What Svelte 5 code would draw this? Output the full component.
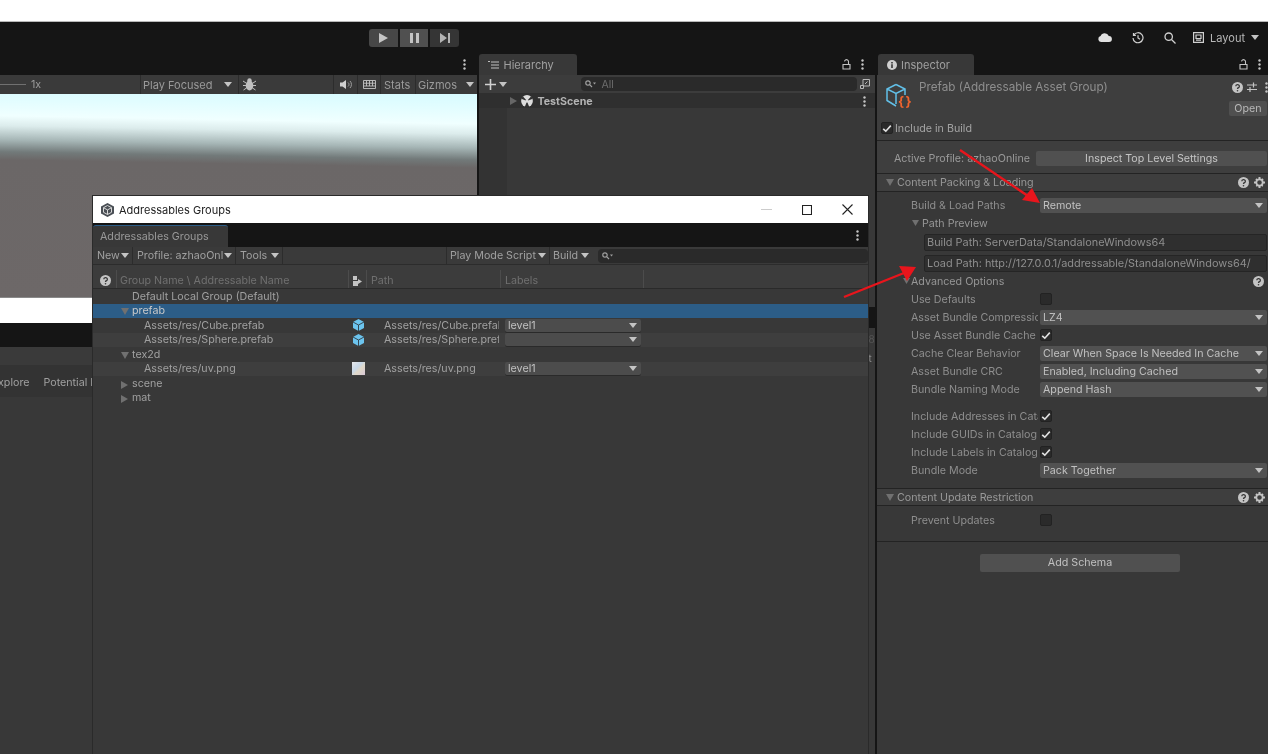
<script lang="ts">
  const treeRows = [
    { name: 'Default Local Group (Default)', depth: 0, alt: false },
    { name: 'prefab', depth: 0, fold: 'open', selected: true },
    { name: 'Assets/res/Cube.prefab', depth: 1, icon: 'cube', path: 'Assets/res/Cube.prefab', label: 'level1', alt: false },
    { name: 'Assets/res/Sphere.prefab', depth: 1, icon: 'cube', path: 'Assets/res/Sphere.prefab', label: '', alt: true },
    { name: 'tex2d', depth: 0, fold: 'open', alt: false },
    { name: 'Assets/res/uv.png', depth: 1, icon: 'tex', path: 'Assets/res/uv.png', label: 'level1', alt: true },
    { name: 'scene', depth: 0, fold: 'closed', alt: false },
    { name: 'mat', depth: 0, fold: 'closed', alt: false }
  ];

  const advancedRows = [
    { label: 'Use Defaults', check: false },
    { label: 'Asset Bundle Compression', value: 'LZ4' },
    { label: 'Use Asset Bundle Cache', check: true },
    { label: 'Cache Clear Behavior', value: 'Clear When Space Is Needed In Cache' },
    { label: 'Asset Bundle CRC', value: 'Enabled, Including Cached' },
    { label: 'Bundle Naming Mode', value: 'Append Hash' }
  ];

  const catalogRows = [
    { label: 'Include Addresses in Catalog', check: true },
    { label: 'Include GUIDs in Catalog', check: true },
    { label: 'Include Labels in Catalog', check: true },
    { label: 'Bundle Mode', value: 'Pack Together' }
  ];
</script>

{#snippet caret()}
  <svg class="caret" width="8" height="5" viewBox="0 0 8 5"><path d="M0 0h8L4 5z" fill="currentColor" /></svg>
{/snippet}

{#snippet kebab()}
  <svg class="kebab" width="3" height="11" viewBox="0 0 3 11"><circle cx="1.5" cy="1.5" r="1.2" /><circle cx="1.5" cy="5.5" r="1.2" /><circle cx="1.5" cy="9.5" r="1.2" /></svg>
{/snippet}

{#snippet lock()}
  <svg width="9" height="11" viewBox="0 0 9 11" fill="none" stroke="#c4c4c4" stroke-width="1.1"><path d="M1 5.500h7v4.500H1zM6.500 5.500V3a2 2 0 0 0-4-.6" /></svg>
{/snippet}

{#snippet help(size = 11)}
  <svg width={size} height={size} viewBox="0 0 11 11"><circle cx="5.500" cy="5.500" r="5.500" fill="#c4c4c4" /><path d="M3.800 4.200a1.800 1.600 0 1 1 2.600 1.400c-.6.4-.9.6-.9 1.300" fill="none" stroke="#383838" stroke-width="1.300" /><circle cx="5.500" cy="8.700" r=".8" fill="#383838" /></svg>
{/snippet}

{#snippet gear()}
  <svg width="11" height="11" viewBox="0 0 11 11"><circle cx="5.500" cy="5.500" r="3.200" fill="none" stroke="#c4c4c4" stroke-width="1.800" /><path d="M4.500 0h2v2h-2zM4.500 9h2v2h-2zM0 4.500h2v2H0zM9 4.500h2v2H9zM1.300 2.700l1.400-1.400 1 1-1.400 1.400zM8.300 9.700l-1.400-1.400 1-1 1.400 1.400zM9.700 2.700L8.300 1.300l-1 1 1.400 1.400zM2.700 9.700l1.400-1.400-1-1-1.400 1.400z" fill="#c4c4c4" /></svg>
{/snippet}

{#snippet search()}
  <svg width="11" height="8" viewBox="0 0 11 8" fill="none" stroke="#a0a0a0" stroke-width="1.200"><circle cx="3" cy="3" r="2.200" /><path d="M4.600 4.600L7 7" /><path d="M8 2.500h3L9.500 4.500z" fill="#a0a0a0" stroke="none" /></svg>
{/snippet}

{#snippet checkbox(on)}
  <span class="check">
    {#if on}
      <svg width="10" height="9" viewBox="0 0 10 9" fill="none" stroke="#e0e0e0" stroke-width="1.600"><path d="M1.200 4.800L3.800 7.200 8.800 1.600" /></svg>
    {/if}
  </span>
{/snippet}

{#snippet dropdown(value)}
  <span class="dropdown"><span class="dd-text">{value}</span>{@render caret()}</span>
{/snippet}

{#snippet fieldRow(row)}
  <div class="row">
    <span class="row-label">{row.label}</span>
    {#if row.value}
      {@render dropdown(row.value)}
    {:else}
      {@render checkbox(row.check)}
    {/if}
  </div>
{/snippet}

<div class="editor">
  <div class="top-white"></div>

  <div class="main-toolbar">
    <div class="play-group">
      <span class="play-btn first">
        <svg width="9" height="10" viewBox="0 0 9 10"><path d="M0 0l9 5-9 5z" fill="#c4c4c4" /></svg>
      </span>
      <span class="play-btn pause">
        <svg width="9" height="10" viewBox="0 0 9 10"><path d="M0 0h3v10H0zM6 0h3v10H6z" fill="#c4c4c4" /></svg>
      </span>
      <span class="play-btn last">
        <svg width="10" height="10" viewBox="0 0 10 10"><path d="M0 0l7 5-7 5zM8 0h2v10H8z" fill="#b4b4b4" /></svg>
      </span>
    </div>
    <div class="top-tools">
      <svg class="t-cloud" width="14" height="9" viewBox="0 0 14 9"><path d="M3 9a3 3 0 0 1-.4-5.900A4.400 4.400 0 0 1 10.800 3 3 3 0 0 1 11 9z" fill="#e0e0e0" /></svg>
      <svg class="t-history" width="12" height="12" viewBox="0 0 12 12" fill="none" stroke="#d0d0d0" stroke-width="1.200"><path d="M1.800 3a5 5 0 1 1-.8 3M1.500 1v2.400h2.400M6 3.200V6l2 1.200" /></svg>
      <svg class="t-search" width="12" height="12" viewBox="0 0 12 12" fill="none" stroke="#d0d0d0" stroke-width="1.300"><circle cx="4.700" cy="4.700" r="3.700" /><path d="M7.500 7.500L11.500 11.500" /></svg>
      <svg class="t-layout" width="11" height="11" viewBox="0 0 11 11" fill="none" stroke="#d0d0d0" stroke-width="1.200"><path d="M.6.600h9.800v9.800H.6zM3 3h5v3.500H3zM3 8.200h5" /></svg>
      <span class="t-layout-text">Layout</span>
      {@render caret()}
    </div>
  </div>

  <div class="panes">
    <section class="pane game">
      <div class="tabstrip game-strip">{@render kebab()}</div>
      <div class="game-toolbar">
        <span class="slider"></span>
        <span class="scale">1x</span>
        <span class="play-focused">Play Focused {@render caret()}</span>
        <span class="tb-cell bug">
          <svg width="13" height="13" viewBox="0 0 13 13"><ellipse cx="6.500" cy="7.500" rx="3.800" ry="5" fill="#c0c0c0" /><circle cx="6.500" cy="2.500" r="2.200" fill="#c0c0c0" /><path d="M0 3l3 2M13 3l-3 2M0 7.500h3M13 7.500h-3M.5 12l3-2M12.500 12l-3-2" stroke="#c0c0c0" /></svg>
        </span>
        <span class="tb-spacer"></span>
        <span class="tb-cell mute">
          <svg width="12" height="9" viewBox="0 0 12 9"><path d="M0 2.500h2.500L6 0v9L2.500 6.500H0z" fill="#d0d0d0" /><path d="M8 2.500a2.500 2.500 0 0 1 0 4M10 1a5 5 0 0 1 0 7" stroke="#a0a0a0" fill="none" /></svg>
        </span>
        <span class="tb-cell keys">
          <svg width="13" height="9" viewBox="0 0 13 9" fill="none" stroke="#c4c4c4" stroke-width=".9"><path d="M.5.500h12v8H.5zM.5 3.200h12M.5 6h12M3.500.5V6M6.500.5V6M9.500.5V6" /></svg>
        </span>
        <span class="tb-cell stats">Stats</span>
        <span class="tb-cell gizmos">Gizmos</span>
        <span class="tb-cell gizmo-arrow">{@render caret()}</span>
      </div>
      <div class="game-view"></div>
      <div class="game-white"></div>
      <div class="game-black"></div>
      <div class="game-grey"></div>
      <div class="console-tabs"><span class="explore">xplore</span><span class="potential">Potential Issues</span></div>
      <div class="pane-fill"></div>
    </section>

    <section class="pane hierarchy">
      <div class="tabstrip">
        <span class="tab h-tab">
          <svg width="11" height="8" viewBox="0 0 11 8" stroke="#c0c0c0" stroke-width="1"><path d="M3 1h8M3 4h8M3 7h8M0 .5h2" /></svg>
          Hierarchy
        </span>
        <span class="strip-tools">{@render lock()}{@render kebab()}</span>
      </div>
      <div class="h-toolbar">
        <svg class="plus" width="11" height="11" viewBox="0 0 11 11"><path d="M4.700 0h1.600v11H4.700zM0 4.700h11v1.600H0z" fill="#d0d0d0" /></svg>
        {@render caret()}
        <span class="search-field h-search">{@render search()}<span class="search-text">All</span></span>
        <svg width="10" height="10" viewBox="0 0 10 10" fill="none" stroke="#b8b8b8"><path d="M3 .5h6.500V7H3zM.5 6.500h3v3h-3zM5 5l2.500-2.500" /></svg>
      </div>
      <div class="scene-row">
        <svg class="fold" width="7" height="8" viewBox="0 0 7 8"><path d="M0 0l7 4-7 4z" fill="#666" /></svg>
        <svg width="12" height="12" viewBox="0 0 12 12"><circle cx="6" cy="6" r="5.900" fill="#dcdcdc" /><path d="M6 6.500L3.700 12h4.600zM6 6L.2 3.800l1.600-2.600zM6 6l5.800-2.200-1.600-2.600z" fill="#2f2f2f" /><circle cx="6" cy="6" r="1.500" fill="#dcdcdc" /></svg>
        <span class="scene-name">TestScene</span>
        {@render kebab()}
      </div>
      <div class="h-body"><span class="h-gutter"></span></div>
      <div class="h-black"></div>
      <div class="h-lower"><span class="edge-a">8</span><span class="edge-b">t</span></div>
    </section>

    <section class="pane inspector">
      <div class="tabstrip">
        <span class="tab i-tab">
          <svg width="10" height="10" viewBox="0 0 10 10"><circle cx="5" cy="5" r="5" fill="#d0d0d0" /><path d="M4.200 2h1.600v1.400H4.200zM4.200 4.200h1.600V8H4.200z" fill="#383838" /></svg>
          Inspector
        </span>
        <span class="strip-tools">{@render lock()}{@render kebab()}</span>
      </div>

      <div class="i-head">
        <div class="i-head-top">
          <span class="asset-icon">
            <svg width="22" height="25" viewBox="0 0 22 25" fill="none" stroke="#62c0e8" stroke-width="1.500"><path d="M11 1.500L20 6v6M11 1.500L2 6v11.500L11 23M2 6l9 4.500L20 6M11 10.500V21" /></svg>
            <span class="braces">{'{}'}</span>
          </span>
          <div class="i-title-col">
            <div class="i-title-row">
              <span class="i-title">Prefab (Addressable Asset Group)</span>
              <span class="i-title-tools">
                {@render help()}
                <svg width="10" height="10" viewBox="0 0 10 10" stroke="#c4c4c4" stroke-width="1.200"><path d="M0 3h10M0 7.500h10M6.500 .5v5M3 5v5" /></svg>
                {@render kebab()}
              </span>
            </div>
            <span class="open-btn">Open</span>
          </div>
        </div>
        <div class="include-row">{@render checkbox(true)}<span>Include in Build</span></div>
      </div>

      <div class="profile-row">
        <span class="profile-label">Active Profile: azhaoOnline</span>
        <span class="wide-btn">Inspect Top Level Settings</span>
      </div>

      <div class="section-head">
        <svg class="sec-fold" width="8" height="7" viewBox="0 0 8 7"><path d="M0 0h8L4 7z" fill="#707070" /></svg>
        <span class="sec-title">Content Packing &amp; Loading</span>
        <span class="sec-tools">{@render help()}{@render gear()}</span>
      </div>

      <div class="section-body packing">
        {@render fieldRow({ label: 'Build & Load Paths', value: 'Remote' })}
        <div class="row preview-fold">
          <svg width="7" height="6" viewBox="0 0 7 6"><path d="M0 0h7L3.500 6z" fill="#707070" /></svg>
          <span class="row-text">Path Preview</span>
        </div>
        <div class="path-field">Build Path: ServerData/StandaloneWindows64</div>
        <div class="path-field">Load Path: http://127.0.0.1/addressable/StandaloneWindows64/</div>
        <div class="row advanced-fold">
          <svg width="7" height="6" viewBox="0 0 7 6"><path d="M0 0h7L3.500 6z" fill="#707070" /></svg>
          <span class="row-text">Advanced Options</span>
          <span class="adv-help">{@render help()}</span>
        </div>
        {#each advancedRows as row}
          {@render fieldRow(row)}
        {/each}
        <div class="row-gap"></div>
        {#each catalogRows as row}
          {@render fieldRow(row)}
        {/each}
      </div>

      <div class="section-head bordered">
        <svg class="sec-fold" width="8" height="7" viewBox="0 0 8 7"><path d="M0 0h8L4 7z" fill="#707070" /></svg>
        <span class="sec-title">Content Update Restriction</span>
        <span class="sec-tools">{@render help()}{@render gear()}</span>
      </div>

      <div class="section-body update">
        {@render fieldRow({ label: 'Prevent Updates', check: false })}
      </div>

      <div class="schema-wrap"><span class="schema-btn">Add Schema</span></div>
    </section>
  </div>

  <!-- floating editor window -->
  <div class="window">
    <div class="win-title">
      <svg width="13" height="14" viewBox="0 0 13 14"><path d="M6.500 0L13 3.500v7L6.500 14 0 10.500v-7z" fill="#4a4f55" /><path d="M6.500 2.500l4 2.200v4.600l-4 2.200-4-2.200V4.700zM2.500 4.700l4 2.200 4-2.200M6.500 6.900v4.600" fill="none" stroke="#d8d8d8" stroke-width="1" /></svg>
      <span class="win-name">Addressables Groups</span>
      <span class="win-controls">
        <svg width="11" height="1" viewBox="0 0 11 1"><path d="M0 0h11v1H0z" fill="#ccc" /></svg>
        <svg width="10" height="10" viewBox="0 0 10 10" fill="none" stroke="#222" stroke-width="1.100"><path d="M.5.500h9v9h-9z" /></svg>
        <svg width="11" height="11" viewBox="0 0 11 11" fill="none" stroke="#222" stroke-width="1.100"><path d="M.5.500l10 10M10.500.500l-10 10" /></svg>
      </span>
    </div>
    <div class="win-strip">
      <span class="win-tab">Addressables Groups</span>
      {@render kebab()}
    </div>
    <div class="win-toolbar">
      <span class="wt-btn new">New {@render caret()}</span>
      <span class="wt-btn profile">Profile: azhaoOnl {@render caret()}</span>
      <span class="wt-btn tools">Tools {@render caret()}</span>
      <span class="wt-gap"></span>
      <span class="wt-btn playmode">Play Mode Script {@render caret()}</span>
      <span class="wt-btn build">Build {@render caret()}</span>
      <span class="search-field win-search">{@render search()}</span>
    </div>
    <div class="tree-head">
      <span class="th help-col">{@render help()}</span>
      <span class="th name-col">Group Name \ Addressable Name</span>
      <span class="th icon-col">
        <svg width="9" height="10" viewBox="0 0 9 10"><path d="M0 0h4v4H0zM0 5h5v5H0zM5 3l4 2.500-4 2.500z" fill="#c4c4c4" /></svg>
      </span>
      <span class="th path-col">Path</span>
      <span class="th labels-col">Labels</span>
    </div>
    {#each treeRows as row}
      <div class="tree-row" class:selected={row.selected} class:alt={row.alt}>
        <span class="tr-name" class:child={row.depth === 1}>
          {#if row.fold === 'open'}
            <svg class="tr-fold" width="8" height="7" viewBox="0 0 8 7"><path d="M0 0h8L4 7z" fill="#707070" /></svg>
          {:else if row.fold === 'closed'}
            <svg class="tr-fold" width="7" height="8" viewBox="0 0 7 8"><path d="M0 0l7 4-7 4z" fill="#707070" /></svg>
          {/if}
          {row.name}
        </span>
        {#if row.icon}
          <span class="tr-icon">
            {#if row.icon === 'cube'}
              <svg width="11" height="12" viewBox="0 0 11 12"><path d="M5.500 0L11 3v6l-5.500 3L0 9V3z" fill="#6cc4ee" /><path d="M0 3l5.500 3L11 3M5.500 6v6" stroke="#2f3a42" stroke-width=".9" fill="none" /></svg>
            {:else}
              <span class="tex-icon"></span>
            {/if}
          </span>
          <span class="tr-path">{row.path}</span>
          <span class="tr-label">{@render dropdown(row.label)}</span>
        {/if}
      </div>
    {/each}
  </div>

  <svg class="arrows" width="1268" height="754" viewBox="0 0 1268 754">
    <path d="M960 150L1028 196M844 297L904 273" stroke="#e8151c" stroke-width="2.400" fill="none" />
    <path d="M1040 203L1032 188L1022 200z" fill="#e8151c" />
    <path d="M916 267L899 266L907 281z" fill="#e8151c" />
  </svg>
</div>

<style>
  :global(body) {
    margin: 0;
    background: #383838;
  }

  .editor {
    position: relative;
    display: flex;
    flex-direction: column;
    width: 1268px;
    height: 754px;
    overflow: hidden;
    background: #383838;
    color: #a0a0a0;
    font-family: Inter, "Liberation Sans", sans-serif;
    font-size: 10.7px;
    filter: blur(0.45px);
  }

  svg {
    flex: none;
    display: block;
  }

  .caret {
    color: #c4c4c4;
  }

  .kebab {
    fill: #c4c4c4;
  }

  .top-white {
    height: 21px;
    background: #fff;
    border-bottom: 1px solid #b8b8b8;
    flex: none;
  }

  .main-toolbar {
    position: relative;
    flex: none;
    display: flex;
    align-items: center;
    height: 32px;
    background: #151515;
  }

  .play-group {
    display: flex;
    gap: 2px;
    margin-left: 369px;
    margin-top: -1px;
  }

  .play-btn {
    display: flex;
    align-items: center;
    justify-content: center;
    width: 28px;
    height: 18px;
    background: #3c3c3c;
  }

  .play-btn.first {
    width: 29px;
    background: #474747;
    border-radius: 3px 0 0 3px;
  }

  .play-btn.pause {
    background: #505050;
  }

  .play-btn.last {
    width: 29px;
    background: #353535;
    border-radius: 0 3px 3px 0;
  }

  .top-tools {
    display: flex;
    align-items: center;
    margin-left: auto;
    margin-right: 9px;
    margin-top: -1px;
    color: #b8b8b8;
    font-size: 11px;
  }

  .t-history {
    margin-left: 20px;
  }

  .t-search {
    margin-left: 20px;
  }

  .t-layout {
    margin-left: 17px;
  }

  .t-layout-text {
    margin: 0 6px 0 6px;
  }

  .panes {
    flex: 1;
    display: flex;
    min-height: 0;
    background: #151515;
  }

  .pane {
    display: flex;
    flex-direction: column;
  }

  .game {
    width: 478px;
    margin-right: 2px;
  }

  .hierarchy {
    width: 396px;
    margin-right: 2px;
  }

  .inspector {
    flex: 1;
    background: #383838;
  }

  .tabstrip {
    flex: none;
    display: flex;
    height: 21px;
    background: #151515;
  }

  .game-strip {
    justify-content: flex-end;
    align-items: center;
    padding-right: 11px;
  }

  .tab {
    display: flex;
    align-items: center;
    gap: 4px;
    background: #383838;
    border-radius: 3px 3px 0 0;
    color: #a0a0a0;
    font-size: 11px;
  }

  .h-tab {
    width: 98px;
    padding-left: 9px;
    box-sizing: border-box;
  }

  .i-tab {
    width: 96px;
    padding-left: 9px;
    box-sizing: border-box;
    margin-left: 1px;
  }

  .strip-tools {
    display: flex;
    align-items: center;
    gap: 10px;
    margin-left: auto;
    padding-right: 7px;
  }

  .hierarchy .strip-tools {
    padding-right: 11px;
  }

  .game-toolbar {
    flex: none;
    display: flex;
    align-items: center;
    height: 19px;
    background: #3a3a3a;
    color: #9a9a9a;
  }

  .slider {
    width: 26px;
    height: 1px;
    background: #707070;
  }

  .scale {
    margin-left: 5px;
    width: 109px;
  }

  .play-focused {
    display: flex;
    align-items: center;
    justify-content: space-between;
    box-sizing: border-box;
    width: 98px;
    height: 100%;
    padding: 0 6px 0 2px;
    border-left: 1px solid #2c2c2c;
    font-size: 11px;
  }

  .tb-cell {
    display: flex;
    align-items: center;
    justify-content: center;
    box-sizing: border-box;
    height: 100%;
    border-left: 1px solid #2c2c2c;
  }

  .bug {
    width: 22px;
  }

  .tb-spacer {
    width: 73px;
  }

  .mute {
    width: 24px;
  }

  .keys {
    width: 23px;
  }

  .stats {
    justify-content: flex-start;
    width: 35px;
    padding-left: 3px;
    font-size: 11px;
  }

  .gizmos {
    justify-content: flex-start;
    width: 47px;
    padding-left: 2px;
    font-size: 11px;
  }

  .gizmo-arrow {
    width: 15px;
    border: 0;
  }

  .game-view {
    flex: none;
    height: 203px;
    background: linear-gradient(181deg, #d7fbff 0, #e2fdff 14px, #f0ffff 30px, #dcecec 40px, #a6b6b6 54px, #727a7a 66px, #6b6767 74px, #6d6868 100%);
  }

  .game-white {
    flex: none;
    height: 26px;
    background: #fff;
    border-top: 1px solid #8a8a8a;
    box-sizing: border-box;
  }

  .game-black {
    flex: none;
    height: 24px;
    background: #151515;
  }

  .game-grey {
    flex: none;
    height: 18px;
    background: #3a3a3a;
  }

  .console-tabs {
    flex: none;
    position: relative;
    height: 32px;
    background: #333;
    line-height: 36px;
    white-space: nowrap;
    overflow: hidden;
  }

  .explore {
    margin-left: -2px;
  }

  .potential {
    margin-left: 14px;
  }

  .pane-fill {
    flex: 1;
    background: #383838;
  }

  .h-toolbar {
    flex: none;
    display: flex;
    align-items: center;
    height: 18px;
    padding-left: 6px;
    background: #3c3c3c;
  }

  .plus {
    margin-right: 3px;
  }

  .search-field {
    display: flex;
    align-items: center;
    box-sizing: border-box;
    height: 14px;
    background: #2a2a2a;
    border-radius: 4px;
    padding-left: 4px;
  }

  .h-search {
    width: 276px;
    margin: 0 3px 0 74px;
  }

  .search-text {
    margin-left: 5px;
    color: #6c6c6c;
    font-size: 10.500px;
  }

  .scene-row {
    flex: none;
    display: flex;
    align-items: center;
    gap: 4px;
    box-sizing: border-box;
    height: 15px;
    padding: 1px 9px 0 31px;
    background: #2f2f2f;
  }

  .scene-name {
    flex: 1;
    color: #b4b4b4;
    font-weight: 700;
  }

  .h-body {
    flex: none;
    display: flex;
    height: 199px;
    background: #383838;
  }

  .h-gutter {
    width: 28px;
    background: #333;
  }

  .h-black {
    flex: none;
    height: 21px;
    background: #151515;
  }

  .h-lower {
    flex: 1;
    display: flex;
    flex-direction: column;
    padding: 4px 0 0 389px;
    background: #383838;
    line-height: 15px;
    font-size: 10px;
  }

  .edge-a {
    color: #555;
  }

  .edge-b {
    margin-top: 4px;
    color: #8a8a8a;
  }

  .i-head {
    flex: none;
    height: 66px;
    box-sizing: border-box;
    padding: 5px 0 0 4px;
    background: #3e3e3e;
    border-bottom: 1px solid #232323;
  }

  .i-head-top {
    display: flex;
    height: 42px;
  }

  .asset-icon {
    position: relative;
    width: 34px;
    margin-left: 4px;
    flex: none;
    padding-top: 3px;
    box-sizing: border-box;
  }

  .braces {
    position: absolute;
    left: 13px;
    top: 13px;
    color: #f0642e;
    font-size: 13px;
    font-weight: 700;
    letter-spacing: 1.5px;
  }

  .i-title-col {
    flex: 1;
    display: flex;
    flex-direction: column;
    align-items: flex-end;
    min-width: 0;
  }

  .i-title-row {
    display: flex;
    align-items: center;
    width: 100%;
    height: 14px;
  }

  .i-title {
    color: #8e8e8e;
    font-size: 11.700px;
    white-space: nowrap;
  }

  .i-title-tools {
    display: flex;
    align-items: center;
    gap: 4px;
    margin-left: auto;
    padding-right: 0;
  }

  .i-title-tools .kebab {
    margin-left: 4px;
  }

  .open-btn {
    display: block;
    margin: 7px 1px 0 0;
    width: 38px;
    height: 15px;
    background: #505050;
    border-radius: 2px;
    color: #b8b8b8;
    text-align: center;
    line-height: 15px;
  }

  .include-row {
    display: flex;
    align-items: center;
    gap: 2px;
    height: 12px;
    color: #a4a4a4;
  }

  .check {
    display: flex;
    align-items: center;
    justify-content: center;
    flex: none;
    width: 12px;
    height: 12px;
    background: #2a2a2a;
    border: 1px solid #222;
    border-radius: 2px;
    box-sizing: border-box;
  }

  .profile-row {
    flex: none;
    display: flex;
    align-items: center;
    height: 32px;
    padding: 3px 1px 0 17px;
    box-sizing: border-box;
    background: #3e3e3e;
  }

  .profile-label {
    width: 142px;
    color: #9a9a9a;
    white-space: nowrap;
  }

  .wide-btn {
    width: 231px;
    height: 15px;
    background: #505050;
    border-radius: 2px;
    color: #c4c4c4;
    text-align: center;
    line-height: 15px;
  }

  .section-head {
    flex: none;
    display: flex;
    align-items: center;
    box-sizing: border-box;
    height: 19px;
    padding: 0 3px 0 9px;
    background: #3e3e3e;
    border-top: 1px solid #232323;
    border-bottom: 1px solid #232323;
    color: #989898;
  }

  .section-head.bordered {
    height: 18px;
  }

  .sec-title {
    margin-left: 3px;
  }

  .sec-tools {
    display: flex;
    align-items: center;
    gap: 5px;
    margin-left: auto;
  }

  .section-body {
    flex: none;
    padding: 4px 1px 9px 34px;
  }

  .section-body.update {
    padding-top: 5px;
    padding-bottom: 12px;
    border-bottom: 1px solid #232323;
  }

  .row {
    display: flex;
    align-items: center;
    height: 18px;
  }

  .row-label {
    flex: none;
    width: 127px;
    margin-right: 2px;
    overflow: hidden;
    white-space: nowrap;
    color: #8e8e8e;
  }

  .row-text {
    color: #969696;
  }

  .row-gap {
    height: 9px;
  }

  .dropdown {
    flex: 1;
    display: flex;
    align-items: center;
    justify-content: space-between;
    box-sizing: border-box;
    min-width: 0;
    height: 15px;
    padding: 0 4px 0 3px;
    background: #515151;
    border-radius: 2px;
    color: #c0c0c0;
  }

  .dd-text {
    white-space: nowrap;
    overflow: hidden;
  }

  .preview-fold {
    gap: 3px;
    padding-left: 1px;
  }

  .advanced-fold {
    gap: 1px;
    margin-left: -8px;
  }

  .adv-help {
    margin-left: auto;
    padding-right: 3px;
  }

  .path-field {
    box-sizing: border-box;
    height: 17px;
    margin: 2px 0 4px 13px;
    padding-left: 2px;
    background: #2f2f2f;
    border: 1px solid #252525;
    border-radius: 2px;
    color: #8e8e8e;
    font-size: 10.900px;
    line-height: 15px;
    white-space: nowrap;
    overflow: hidden;
  }

  .path-field + .path-field {
    margin-top: 0;
    margin-bottom: 0;
  }

  .schema-wrap {
    display: flex;
    padding-top: 12px;
    padding-left: 103px;
  }

  .schema-btn {
    width: 200px;
    height: 18px;
    background: #505050;
    border-radius: 2px;
    color: #c0c0c0;
    text-align: center;
    line-height: 18px;
  }

  .window {
    position: absolute;
    left: 93px;
    top: 196px;
    width: 775px;
    height: 558px;
    background: #383838;
    box-shadow: 0 0 0 1px #2a2a2a;
    color: #a0a0a0;
  }

  .win-title {
    display: flex;
    align-items: center;
    height: 27px;
    padding-left: 8px;
    background: #fff;
    box-sizing: border-box;
  }

  .win-name {
    margin-left: 5px;
    color: #222;
    font-size: 11px;
  }

  .win-controls {
    display: flex;
    align-items: center;
    gap: 30px;
    margin-left: auto;
    padding-right: 15px;
  }

  .win-strip {
    display: flex;
    align-items: center;
    justify-content: space-between;
    height: 24px;
    padding-right: 9px;
    background: #151515;
  }

  .win-tab {
    box-sizing: border-box;
    align-self: flex-end;
    width: 135px;
    height: 22px;
    padding: 4px 0 0 7px;
    background: #383838;
    border-top: 1px solid #2c5d87;
    border-radius: 3px 3px 0 0;
    color: #999;
  }

  .win-toolbar {
    display: flex;
    align-items: center;
    box-sizing: border-box;
    height: 18px;
    background: #3a3a3a;
    border-bottom: 1px solid #2c2c2c;
  }

  .wt-btn {
    display: flex;
    align-items: center;
    justify-content: space-between;
    box-sizing: border-box;
    height: 100%;
    padding: 0 3px 0 4px;
    border-right: 1px solid #2c2c2c;
    white-space: nowrap;
  }

  .new {
    width: 40px;
  }

  .profile {
    width: 103px;
  }

  .tools {
    width: 47px;
  }

  .wt-gap {
    width: 163px;
    border-right: 1px solid #2c2c2c;
    height: 100%;
  }

  .playmode {
    width: 103px;
    padding-left: 3px;
  }

  .build {
    width: 42px;
    padding-left: 3px;
    border-right: 0;
  }

  .win-search {
    flex: none;
    width: 270px;
    margin-left: 6px;
  }

  .tree-head {
    display: flex;
    box-sizing: border-box;
    height: 24px;
    padding-top: 5px;
    background: #3c3c3c;
    border-bottom: 1px solid #2a2a2a;
    color: #707070;
  }

  .th {
    display: flex;
    align-items: center;
    box-sizing: border-box;
    border-right: 1px solid #4c4c4c;
    height: 18px;
    padding-top: 3px;
    padding-left: 3px;
    white-space: nowrap;
  }

  .help-col {
    width: 24px;
    padding-left: 7px;
  }

  .name-col {
    width: 232px;
  }

  .icon-col {
    width: 18px;
    padding-left: 4px;
  }

  .path-col {
    width: 134px;
    padding-left: 4px;
  }

  .labels-col {
    width: 143px;
    padding-left: 4px;
  }

  .tree-row {
    display: flex;
    align-items: center;
    box-sizing: border-box;
    height: 14.500px;
    background: #383838;
  }

  .tree-row.alt {
    background: #3e3e3e;
  }

  .tree-row.selected {
    background: #2c5d87;
    color: #c8c8c8;
  }

  .tr-name {
    position: relative;
    flex: none;
    box-sizing: border-box;
    width: 256px;
    padding-left: 39px;
    color: #a0a0a0;
  }

  .tree-row.selected .tr-name {
    color: #c8c8c8;
  }

  .tr-name.child {
    padding-left: 51px;
  }

  .tr-fold {
    position: absolute;
    left: 28px;
    top: 4px;
  }

  .tr-icon {
    display: flex;
    justify-content: center;
    width: 18px;
  }

  .tex-icon {
    width: 13px;
    height: 13px;
    background: linear-gradient(135deg, #e8e8e8, #c8d8e8 40%, #e0d8c8 60%, #d8c8d8);
  }

  .tr-path {
    width: 115px;
    margin-left: 17px;
    overflow: hidden;
    white-space: nowrap;
  }

  .tr-label {
    display: flex;
    width: 136px;
    margin-left: 6px;
  }

  .tr-label .dropdown {
    height: 13px;
    background: #4c4c4c;
    box-shadow: 0 1px 0 #2a2a2a;
  }

  .arrows {
    position: absolute;
    left: 0;
    top: 0;
    pointer-events: none;
  }
</style>
